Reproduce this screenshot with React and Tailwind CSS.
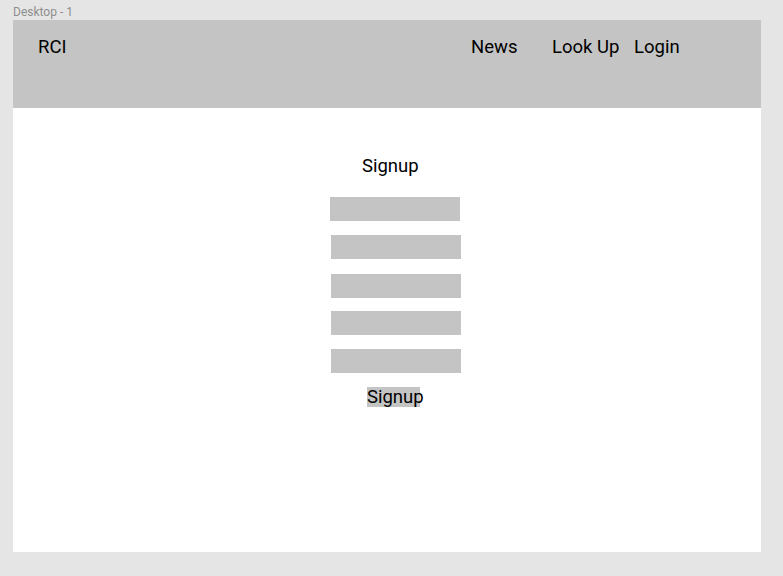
export default function App() {
  return (
    <div className="min-h-[576px] w-[783px] bg-[#e5e5e5] pt-[4px] font-['Roboto',sans-serif]">
      <div className="ml-[13px] h-[16px] text-[12px] leading-[16px] text-[#8f8f8f]">Desktop - 1</div>
      <div className="ml-[13px] h-[532px] w-[748px] bg-white">
        <div className="flex h-[88px] items-start bg-[#c4c4c4] pt-[17px] text-[18.5px] leading-[21px] text-black">
          <span className="ml-[25px] w-[433px]">RCI</span>
          <span className="w-[81px]">News</span>
          <span className="w-[82px]">Look Up</span>
          <span>Login</span>
        </div>
        <div className="flex flex-col items-start pt-[48px] text-[18.5px] leading-[21px] text-black">
          <div className="ml-[349px]">Signup</div>
          <div className="ml-[317px] mt-[20px] h-[24px] w-[130px] bg-[#c4c4c4]" />
          <div className="ml-[318px] mt-[14px] h-[24px] w-[130px] bg-[#c4c4c4]" />
          <div className="ml-[318px] mt-[15px] h-[24px] w-[130px] bg-[#c4c4c4]" />
          <div className="ml-[318px] mt-[13px] h-[24px] w-[130px] bg-[#c4c4c4]" />
          <div className="ml-[318px] mt-[14px] h-[24px] w-[130px] bg-[#c4c4c4]" />
          <div className="ml-[354px] mt-[14px] h-[20px] w-[53px] bg-[#c4c4c4] leading-[21px]">Signup</div>
        </div>
      </div>
    </div>
  );
}
